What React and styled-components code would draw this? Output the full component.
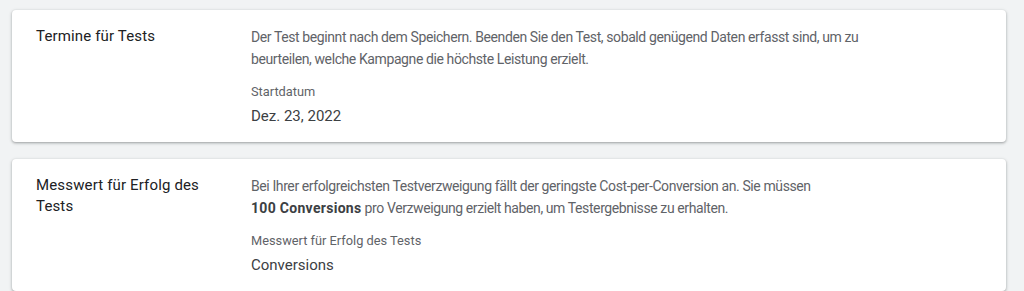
import React from "react";
import styled, { createGlobalStyle } from "styled-components";

const GlobalStyle = createGlobalStyle`
    html, body {
        margin: 0;
        padding: 0;
        background: #f1f3f4;
        font-family: Roboto, "Noto Sans", Arial, sans-serif;
    }
`;

const Page = styled.div`
    padding: 10px 18px 0 12px;
    display: flex;
    flex-direction: column;
    gap: 17px;
`;

const Card = styled.section`
    background: #fff;
    border-radius: 4px;
    box-shadow: 0 1px 2px rgba(60, 64, 67, 0.3),
        0 1px 3px 1px rgba(60, 64, 67, 0.15);
    padding: 16px 24px 14px;
    display: flex;
    gap: 24px;
`;

const Title = styled.h3`
    margin: 0;
    width: 191px;
    flex-shrink: 0;
    font-size: 15px;
    line-height: 21px;
    font-weight: 400;
    letter-spacing: 0.15px;
    color: #202124;
`;

const Body = styled.div`
    max-width: 640px;
    display: flex;
    flex-direction: column;
`;

const Description = styled.p`
    margin: 0;
    font-size: 14px;
    line-height: 22px;
    letter-spacing: -0.4px;
    color: #5f6368;

    & b {
        color: #3c4043;
        font-weight: 700;
        letter-spacing: 0.3px;
        white-space: nowrap;
    }
`;

const Label = styled.div`
    margin-top: 14px;
    font-size: 12.8px;
    line-height: 16px;
    color: #5f6368;
`;

const Value = styled.div`
    margin-top: 4px;
    font-size: 15px;
    line-height: 24px;
    color: #3c4043;
`;

const sections = [
    {
        title: "Termine für Tests",
        text: (
            <>
                Der Test beginnt nach dem Speichern. Beenden Sie den Test,
                sobald genügend Daten erfasst sind, um zu beurteilen, welche
                Kampagne die höchste Leistung erzielt.
            </>
        ),
        label: "Startdatum",
        value: "Dez. 23, 2022"
    },
    {
        title: "Messwert für Erfolg des Tests",
        text: (
            <>
                Bei Ihrer erfolgreichsten Testverzweigung fällt der geringste
                Cost-per-Conversion an. Sie müssen <b>100 Conversions</b> pro
                Verzweigung erzielt haben, um Testergebnisse zu erhalten.
            </>
        ),
        label: "Messwert für Erfolg des Tests",
        value: "Conversions"
    }
];

export default function App() {
    return (
        <>
            <GlobalStyle />
            <Page>
                {sections.map((s) => (
                    <Card key={s.title}>
                        <Title>{s.title}</Title>
                        <Body>
                            <Description>{s.text}</Description>
                            <Label>{s.label}</Label>
                            <Value>{s.value}</Value>
                        </Body>
                    </Card>
                ))}
            </Page>
        </>
    );
}
